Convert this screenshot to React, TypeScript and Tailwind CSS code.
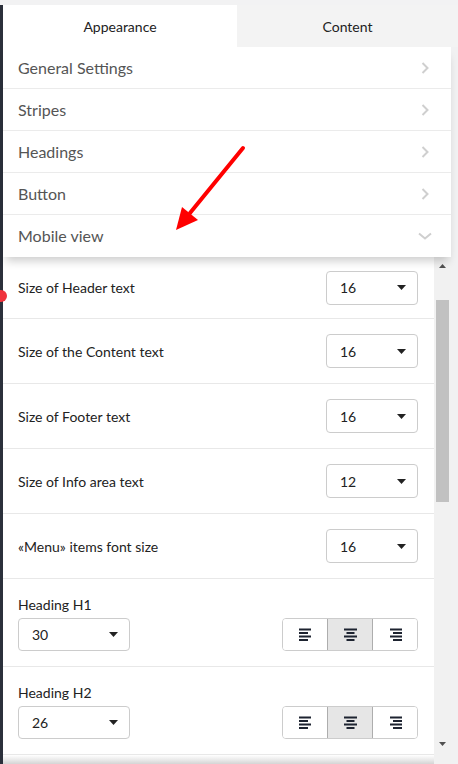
import React from "react";

const font = { fontFamily: "Lato, 'Open Sans', Arial, sans-serif" };

const sections = ["General Settings", "Stripes", "Headings", "Button"];

const sizeRows = [
    { label: "Size of Header text", value: "16" },
    { label: "Size of the Content text", value: "16" },
    { label: "Size of Footer text", value: "16" },
    { label: "Size of Info area text", value: "12" },
    { label: "«Menu» items font size", value: "16" },
];

const headings = [
    { label: "Heading H1", value: "30" },
    { label: "Heading H2", value: "26" },
];

const Chevron = ({ down }: { down?: boolean }) =>
    down ? (
        <svg width="14" height="8" viewBox="0 0 14 8" fill="none">
            <path d="M1 1.5l6 5 6-5" stroke="#cfcfcf" strokeWidth="2" />
        </svg>
    ) : (
        <svg width="8" height="12" viewBox="0 0 8 12" fill="none">
            <path d="M1.5 1l5 5-5 5" stroke="#cfcfcf" strokeWidth="2" />
        </svg>
    );

const Caret = () => (
    <svg width="9" height="5" viewBox="0 0 9 5">
        <path d="M0 0h9L4.5 5z" fill="#222" />
    </svg>
);

const Select = ({ value, wide }: { value: string; wide?: boolean }) => (
    <div
        className={`flex items-center justify-between rounded-[4px] border border-[#cccccc] bg-white pl-[13px] pr-[11px] text-[14px] text-[#222] ${
            wide ? "h-[33px] w-[112px]" : "h-[34px] w-[92px]"
        }`}
    >
        <span>{value}</span>
        <Caret />
    </div>
);

const AlignIcon = ({ kind }: { kind: "left" | "center" | "right" }) => {
    const lines =
        kind === "left"
            ? ["M0 1.5h12", "M0 5h9", "M0 8.5h12", "M0 12h9"]
            : kind === "center"
            ? ["M0 1.5h13", "M2.5 5h8", "M0 8.5h13", "M2.5 12h8"]
            : ["M1 1.5h12", "M4 5h9", "M1 8.5h12", "M4 12h9"];
    return (
        <svg width="13" height="13" viewBox="0 0 13 13" fill="none">
            {lines.map((d) => (
                <path key={d} d={d} stroke="#1d2330" strokeWidth="2.2" />
            ))}
        </svg>
    );
};

const AlignGroup = () => (
    <div className="flex h-[33px] w-[136px] overflow-hidden rounded-[4px] border border-[#cccccc]">
        <div className="flex flex-1 items-center justify-center bg-white">
            <AlignIcon kind="left" />
        </div>
        <div className="flex flex-1 items-center justify-center border-x border-[#adadad] bg-[#e6e6e6]">
            <AlignIcon kind="center" />
        </div>
        <div className="flex flex-1 items-center justify-center bg-white">
            <AlignIcon kind="right" />
        </div>
    </div>
);

export default function App() {
    return (
        <div
            className="relative flex h-[764px] w-[458px] flex-col overflow-hidden bg-[#f1f1f2]"
            style={font}
        >
            <div className="h-[5px] w-full shrink-0 bg-[#f2f2f3]" />
            <div className="flex min-h-0 flex-1">
                <div className="w-[3px] shrink-0 bg-[#2b303b]" />
                <div className="flex min-w-0 flex-1 flex-col">
                    {/* tabs */}
                    <div className="flex h-[42px] shrink-0 text-[14px] text-[#222]">
                        <div className="flex w-[234px] items-center justify-center bg-white">
                            Appearance
                        </div>
                        <div className="flex flex-1 items-center justify-center bg-[#f3f3f3]">
                            Content
                        </div>
                    </div>
                    <div className="flex min-h-0 flex-1">
                        <div className="flex min-w-0 flex-1 flex-col bg-white">
                            {/* accordion */}
                            <div className="relative z-10 shrink-0 bg-white shadow-[0_7px_9px_-3px_rgba(0,0,0,0.2)]">
                                {sections.map((s) => (
                                    <div
                                        key={s}
                                        className="flex h-[42px] items-center justify-between border-b border-[#ebebeb] pl-[15px] pr-[22px] text-[16px] text-[#555]"
                                    >
                                        <span>{s}</span>
                                        <Chevron />
                                    </div>
                                ))}
                                <div className="flex h-[42px] items-center justify-between pl-[15px] pr-[19px] text-[16px] text-[#555]">
                                    <span>Mobile view</span>
                                    <Chevron down />
                                </div>
                            </div>
                            {/* scroll area */}
                            <div className="flex min-h-0 flex-1">
                                <div className="flex min-w-0 flex-1 flex-col">
                                    {sizeRows.map((r, i) => (
                                        <div
                                            key={r.label}
                                            className={`flex shrink-0 items-center justify-between border-b border-[#e8e8e8] pl-[15px] pr-[16px] text-[14px] text-[#222] ${
                                                i === 0 ? "h-[62px]" : "h-[65px]"
                                            }`}
                                        >
                                            <span>{r.label}</span>
                                            <Select value={r.value} />
                                        </div>
                                    ))}
                                    {headings.map((h) => (
                                        <div
                                            key={h.label}
                                            className="flex h-[88px] shrink-0 flex-col border-b border-[#e8e8e8] pl-[15px] pr-[16px] pt-[17px] text-[14px] text-[#222]"
                                        >
                                            <span className="leading-[18px]">{h.label}</span>
                                            <div className="mt-[4px] flex items-center justify-between">
                                                <Select value={h.value} wide />
                                                <AlignGroup />
                                            </div>
                                        </div>
                                    ))}
                                    <div className="h-[10px] shrink-0 bg-gradient-to-b from-white via-[#e9e9e9] to-[#cfcfcf]" />
                                </div>
                                {/* scrollbar */}
                                <div className="flex w-[17px] shrink-0 flex-col items-center bg-[#f1f1f1]">
                                    <div className="flex h-[17px] items-center justify-center">
                                        <svg width="7" height="4" viewBox="0 0 7 4">
                                            <path d="M3.5 0L7 4H0z" fill="#505050" />
                                        </svg>
                                    </div>
                                    <div className="mt-[26px] h-[202px] w-[13px] bg-[#c1c1c1]" />
                                    <div className="flex-1" />
                                    <div className="flex h-[17px] items-start justify-center pt-[3px]">
                                        <svg width="7" height="4" viewBox="0 0 7 4">
                                            <path d="M0 0h7L3.5 4z" fill="#505050" />
                                        </svg>
                                    </div>
                                    <div className="h-[8px]" />
                                </div>
                            </div>
                        </div>
                        <div className="w-[7px] shrink-0 bg-[#f1f1f2]" />
                    </div>
                </div>
            </div>

            {/* annotation: red dot */}
            <div className="absolute left-[-5px] top-[290px] z-20 h-[12px] w-[12px] rounded-full bg-[#f0323c]" />
            {/* annotation: red arrow */}
            <svg
                className="pointer-events-none absolute left-0 top-0 z-20"
                width="458"
                height="764"
                viewBox="0 0 458 764"
            >
                <path
                    d="M243 148L190 213"
                    stroke="#ff0000"
                    strokeWidth="4"
                    strokeLinecap="round"
                />
                <path d="M176 230L182 207L198 220z" fill="#ff0000" />
            </svg>
        </div>
    );
}
